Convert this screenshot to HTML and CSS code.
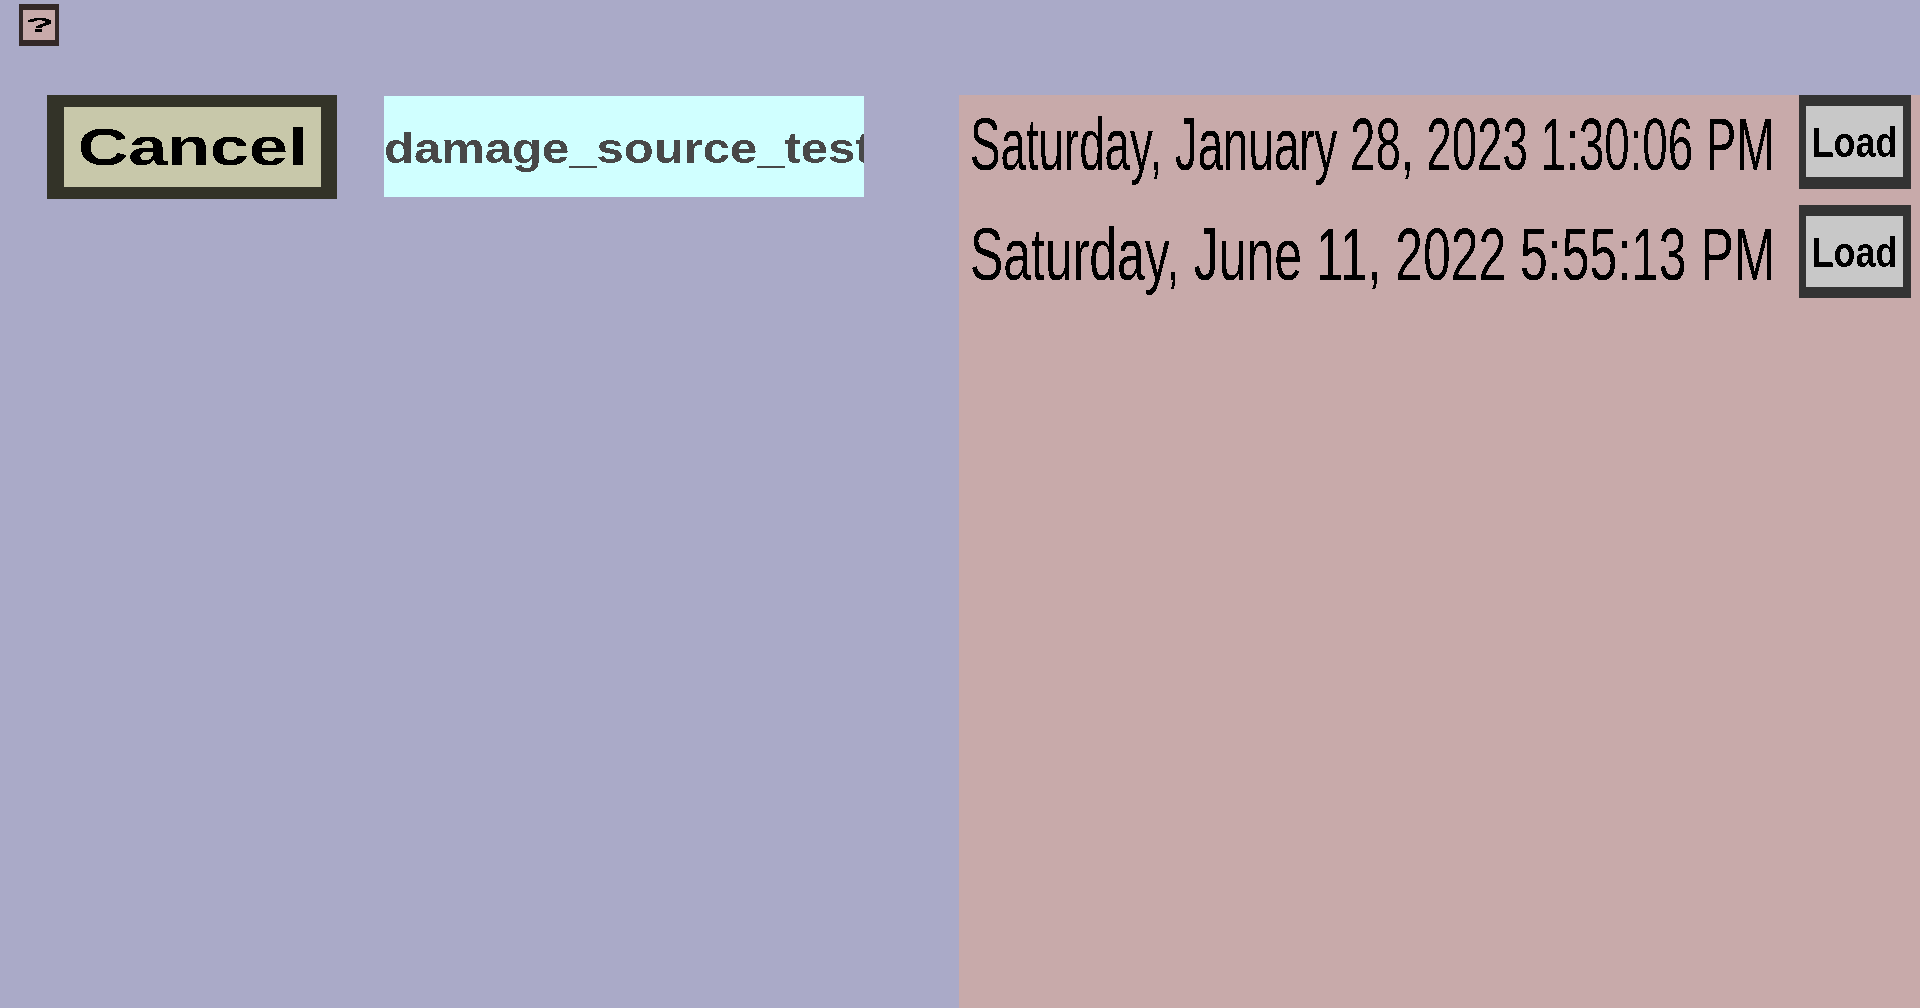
FILE: index.html
```html
<!DOCTYPE html>
<html lang="en">
<head>
  <meta charset="UTF-8">
  <title>Load Save</title>
  <link rel="stylesheet" href="styles.css">
</head>
<body>
  <svg class="defs" width="0" height="0" aria-hidden="true">
    <filter id="crisp" color-interpolation-filters="sRGB">
      <feComponentTransfer>
        <feFuncA type="discrete" tableValues="0 1"></feFuncA>
      </feComponentTransfer>
    </filter>
  </svg>

  <div class="page">
    <div class="left">
      <button class="help"><span class="help-text">?</span></button>
      <div class="controls">
        <button class="cancel"><span class="cancel-text">Cancel</span></button>
        <div class="name-box">
          <input class="name-input" type="text" value="damage_source_test">
        </div>
      </div>
    </div>

    <div class="saves">
      <div class="save-row">
        <div class="save-date"><span class="date-text date-long">Saturday, January 28, 2023 1:30:06 PM</span></div>
        <button class="load"><span class="load-text">Load</span></button>
      </div>
      <div class="save-row">
        <div class="save-date"><span class="date-text date-short">Saturday, June 11, 2022 5:55:13 PM</span></div>
        <button class="load"><span class="load-text">Load</span></button>
      </div>
    </div>
  </div>
</body>
</html>
```

FILE: styles.css
```css
html, body {
  margin: 0;
  height: 100%;
  overflow: hidden;
}

body {
  font-family: "Liberation Sans", Arial, sans-serif;
  background-color: #aaaac8;
  color: #000;
}

button {
  display: block;
  flex: none;
  padding: 0;
  font-family: inherit;
  color: inherit;
  border-style: solid;
  cursor: pointer;
}

.defs {
  display: block;
  height: 0;
}

.page {
  display: flex;
  height: 1008px;
}

.left {
  flex: none;
  width: 959px;
  padding-top: 4px;
  box-sizing: border-box;
}

/* scaled text: the reference stretches its labels to fit each box */
.help-text,
.cancel-text,
.load-text,
.date-text {
  display: inline-block;
  white-space: nowrap;
  filter: url(#crisp);
}

.help {
  width: 40px;
  height: 42px;
  margin-left: 19px;
  border-width: 6px 4px;
  border-color: #332828;
  background-color: #c8aaaa;
  font-size: 21px;
  font-weight: bold;
  line-height: 30px;
}

.help-text {
  transform: scaleX(2.3);
}

.controls {
  display: flex;
  align-items: flex-start;
  margin-top: 49px;
  padding-left: 47px;
}

.cancel {
  width: 290px;
  height: 104px;
  border-width: 12px 16px 12px 17px;
  border-color: #333328;
  background-color: #c8c8aa;
  font-size: 51px;
  font-weight: bold;
  line-height: 81px;
}

.cancel-text {
  transform: scaleX(1.375);
}

.name-box {
  flex: none;
  width: 480px;
  height: 101px;
  margin-top: 1px;
  margin-left: 47px;
  overflow: hidden;
  background-color: #d0ffff;
}

.name-input {
  display: block;
  width: 417px;
  height: 100%;
  box-sizing: border-box;
  padding: 5px 0 0;
  border: none;
  outline: none;
  background: transparent;
  font-family: inherit;
  font-size: 42.5px;
  font-weight: bold;
  color: #484848;
  filter: url(#crisp);
  transform: scaleX(1.153);
  transform-origin: left center;
}

.saves {
  flex: 1;
  min-width: 0;
  margin-top: 95px;
  padding-right: 9px;
  background-color: #c8aaaa;
  display: flex;
  flex-direction: column;
  gap: 16px;
}

.save-row {
  display: flex;
  align-items: flex-start;
  height: 94px;
}

.save-date {
  flex: 1;
  min-width: 0;
  padding-left: 11px;
  line-height: 94px;
}

/* tall narrow dates: font size sets the width, scaleY sets the height */
.date-long {
  font-size: 45.7px;
  transform: scaleY(1.61);
  transform-origin: left 41.3px;
}

.date-short {
  font-size: 49.9px;
  transform: scaleY(1.475);
  transform-origin: left 41.7px;
}

.load {
  width: 112px;
  height: 94px;
  border-width: 11px 8px 12px 7px;
  border-color: #333;
  background-color: #c8c8c8;
  font-size: 35.8px;
  font-weight: bold;
  line-height: 71px;
}

.save-row + .save-row .load {
  height: 93px;
  border-bottom-width: 11px;
}

.load-text {
  transform: translateY(2px) scaleY(1.21);
}
```
